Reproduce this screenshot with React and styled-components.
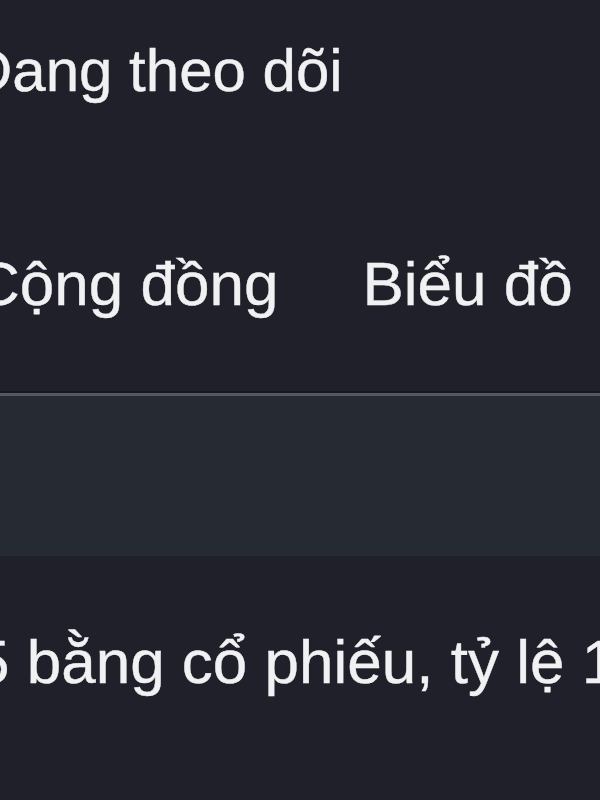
import React from 'react';
import styled, {createGlobalStyle} from 'styled-components';

const GlobalStyle = createGlobalStyle`
  html, body {
    margin: 0;
    padding: 0;
    background: #1f2029;
    overflow: hidden;
  }
  body {
    font-family: "Liberation Sans", Arial, sans-serif;
    color: #f1f1f3;
  }
`;

const Page = styled.div`
  width: 600px;
  height: 800px;
  overflow: hidden;
  background: #1f2029;
`;

const Inner = styled.div`
  margin-left: -35px;
  font-size: 62px;
  line-height: 72px;
  white-space: nowrap;
  -webkit-text-stroke: 0.4px #f1f1f3;
`;

const Header = styled.div`
  padding-top: 35px;
  padding-left: 4px;
`;

const FollowLabel = styled.div`
  height: 72px;
  font-size: 60px;
`;

const Tabs = styled.nav`
  display: flex;
  gap: 84px;
  margin-top: 141px;
  padding-left: 10px;
  padding-bottom: 73px;
`;

const Tab = styled.span`
  color: ${p => (p.active ? '#ffffff' : '#f1f1f3')};
`;

const Band = styled.div`
  margin-left: 35px;
  height: 160px;
  background: #262a33;
  border-top: 3px solid #56585f;
  box-shadow: 0 -2px 0 #17181d;
`;

const Post = styled.p`
  margin: 0;
  padding-top: 70px;
  padding-left: 10px;
`;

export default function App() {
  return (
    <Page>
      <GlobalStyle />
      <Inner>
        <Header>
          <FollowLabel>Đang theo dõi</FollowLabel>
        </Header>
        <Tabs>
          <Tab>Cộng đồng</Tab>
          <Tab>Biểu đồ</Tab>
        </Tabs>
        <Band />
        <Post>5 bằng cổ phiếu, tỷ lệ 1:1</Post>
      </Inner>
    </Page>
  );
}
